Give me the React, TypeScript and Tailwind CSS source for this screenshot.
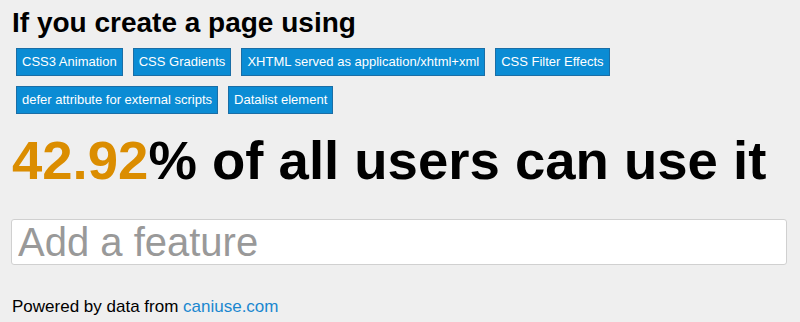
import React from 'react';

const features = [
    'CSS3 Animation',
    'CSS Gradients',
    'XHTML served as application/xhtml+xml',
    'CSS Filter Effects',
    'defer attribute for external scripts',
    'Datalist element',
];

const App: React.FC = () => {
    return (
        <div className="min-h-[322px] bg-[#efefef] px-3 pt-[7px] font-['Liberation_Sans',Arial,sans-serif] text-black">
            <h1 className="text-[28px] font-bold leading-[32px]">If you create a page using</h1>
            <div className="mt-[9px] flex w-[620px] flex-wrap gap-[10px] pl-1">
                {features.map(name => (
                    <span
                        key={name}
                        className="h-[28px] border border-[#1a6ea6] bg-[#0b8cd4] px-[5px] text-[13px] leading-[26px] text-white"
                    >
                        {name}
                    </span>
                ))}
            </div>
            <p className="mt-[15px] text-[54.5px] font-bold leading-[64px] whitespace-nowrap">
                <span className="text-[#db8d00]">42.92</span>% of all users can use it
            </p>
            <input
                type="text"
                placeholder="Add a feature"
                className="mt-[26px] -ml-px block h-[46px] w-[776px] rounded-[3px] border border-[#d0d0d0] bg-white px-[6px] text-[40px] leading-[44px] outline-none placeholder:text-[#999]"
            />
            <p className="mt-[32px] text-[17px] leading-[20px]">
                Powered by data from <a href="#" className="text-[#1a87cf]">caniuse.com</a>
            </p>
        </div>
    );
};

export default App;
